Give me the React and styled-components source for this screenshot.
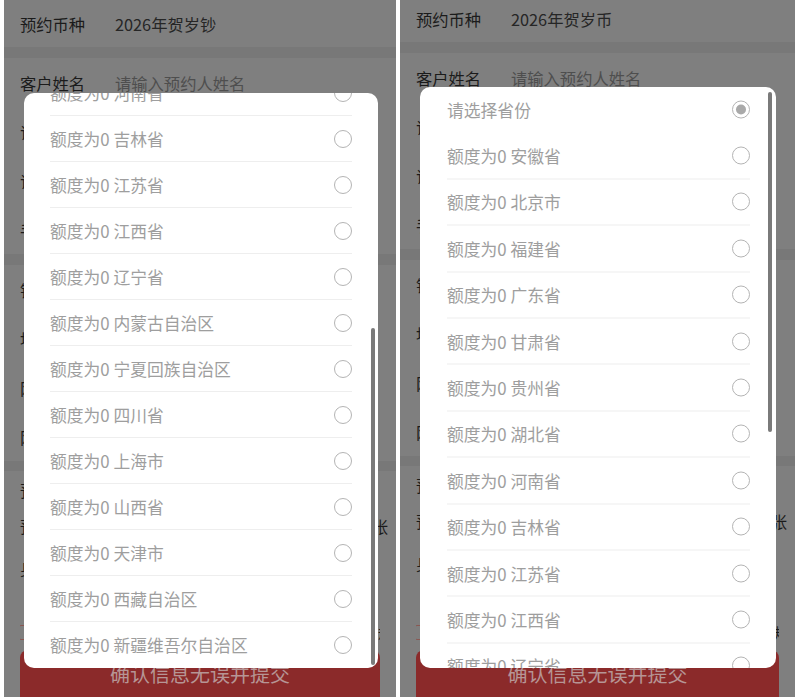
import React from "react";
import styled, { createGlobalStyle } from "styled-components";

const GlobalStyle = createGlobalStyle`
  html, body {
    margin: 0;
    padding: 0;
    background: #ffffff;
  }
  body {
    font-family: "Noto Sans CJK SC", "Noto Sans", sans-serif;
  }
  * {
    box-sizing: border-box;
  }
`;

const Shots = styled.div`
  display: flex;
  gap: 4px;
  padding-left: 4px;
  width: 800px;
  height: 697px;
  overflow: hidden;
`;

const Screen = styled.div`
  position: relative;
  flex-shrink: 0;
  width: ${(p) => p.$width}px;
  height: 697px;
  overflow: hidden;
  background: #7f7f7f;
`;

const Page = styled.div`
  display: flex;
  flex-direction: column;
  margin-top: -${(p) => p.$shift}px;
  height: calc(100% + ${(p) => p.$shift}px);
`;

const Row = styled.div`
  display: flex;
  align-items: center;
  height: ${(p) => p.$h}px;
  padding: 0 8px 0 16px;
  font-size: 16.3px;
  white-space: nowrap;
`;

const Label = styled.span`
  width: 95px;
  flex-shrink: 0;
  color: #1b1b1b;
`;

const Value = styled.span`
  flex: 1;
  color: ${(p) => (p.$placeholder ? "#4e4e4e" : "#262626")};
`;

const Unit = styled.span`
  color: #1b1b1b;
`;

const Band = styled.div`
  height: ${(p) => p.$h}px;
  background: #787878;
`;

const Footer = styled.div`
  margin-top: auto;
  padding: 0 16px;
`;

const AgreeRow = styled.div`
  display: flex;
  align-items: center;
  gap: 6px;
  height: 36px;
  font-size: 14px;
  color: #1b1b1b;
  white-space: nowrap;
  overflow: hidden;
`;

const Checkbox = styled.span`
  width: 15px;
  height: 15px;
  flex-shrink: 0;
  margin-left: -2px;
  border: 1.5px solid #8a5751;
  border-radius: 3px;
`;

const SubmitButton = styled.button`
  display: flex;
  align-items: center;
  justify-content: center;
  width: 100%;
  height: 47px;
  border: none;
  border-radius: 8px 8px 0 0;
  background: #8b2a2a;
  color: #b69595;
  font-family: inherit;
  font-size: 20px;
`;

const Dialog = styled.div`
  position: absolute;
  left: ${(p) => p.$left}px;
  top: ${(p) => p.$top}px;
  width: ${(p) => p.$w}px;
  height: ${(p) => p.$h}px;
  background: #ffffff;
  border-radius: 10px;
  overflow: hidden;
`;

const OptionList = styled.ul`
  list-style: none;
  margin: 0;
  padding: 0;
  transform: translateY(-${(p) => p.$scroll}px);
`;

const Option = styled.li`
  display: flex;
  align-items: center;
  justify-content: space-between;
  height: ${(p) => p.$h}px;
  margin: 0 ${(p) => p.$inset}px 0 ${(p) => p.$indent}px;
  border-top: 1px solid ${(p) => (p.$divider ? "#eeeeee" : "transparent")};
  font-size: 16.8px;
  color: #9e9e9e;
  white-space: nowrap;
`;

const Radio = styled.span`
  display: flex;
  align-items: center;
  justify-content: center;
  flex-shrink: 0;
  width: 18px;
  height: 18px;
  border-radius: 50%;
  border: 1.5px solid #b4b4b4;

  &::after {
    content: "";
    display: ${(p) => (p.$checked ? "block" : "none")};
    width: 10px;
    height: 10px;
    border-radius: 50%;
    background: #a9a9a9;
  }
`;

const Thumb = styled.div`
  position: absolute;
  right: ${(p) => p.$right}px;
  top: ${(p) => p.$top}px;
  width: 4px;
  height: ${(p) => p.$h}px;
  border-radius: 2px;
  background: #7a7a7a;
`;

const provinces = [
  "安徽省",
  "北京市",
  "福建省",
  "广东省",
  "甘肃省",
  "贵州省",
  "湖北省",
  "河南省",
  "吉林省",
  "江苏省",
  "江西省",
  "辽宁省",
  "内蒙古自治区",
  "宁夏回族自治区",
  "四川省",
  "上海市",
  "山西省",
  "天津市",
  "西藏自治区",
  "新疆维吾尔自治区",
];

const options = ["请选择省份", ...provinces.map((p) => `额度为0 ${p}`)];

const shots = [
  {
    width: 392,
    shift: 0,
    coin: "2026年贺岁钞",
    dialog: { left: 20, top: 93, w: 354, h: 575 },
    itemH: 46,
    indent: 26,
    inset: 26,
    scroll: 392,
    thumb: { top: 235, h: 337, right: 3 },
  },
  {
    width: 395,
    shift: 5,
    coin: "2026年贺岁币",
    dialog: { left: 20, top: 87, w: 356, h: 581 },
    itemH: 46.4,
    indent: 27,
    inset: 26,
    scroll: 1.5,
    thumb: { top: 5, h: 340, right: 4 },
  },
];

function PhoneShot({ shot }) {
  return (
    <Screen $width={shot.width}>
      <Page $shift={shot.shift}>
        <Row $h={47}>
          <Label>预约币种</Label>
          <Value>{shot.coin}</Value>
        </Row>
        <Band $h={11} />
        <Row $h={49}>
          <Label>客户姓名</Label>
          <Value $placeholder>请输入预约人姓名</Value>
        </Row>
        <Row $h={49}>
          <Label>证件类型</Label>
          <Value>居民身份证</Value>
        </Row>
        <Row $h={49}>
          <Label>证件号码</Label>
          <Value $placeholder>请输入证件号码</Value>
        </Row>
        <Row $h={49}>
          <Label>手机号码</Label>
          <Value $placeholder>请输入手机号码</Value>
        </Row>
        <Band $h={11} />
        <Row $h={49}>
          <Label>银行名称</Label>
          <Value>中国工商银行</Value>
        </Row>
        <Row $h={49}>
          <Label>地区选择</Label>
          <Value $placeholder>请选择省份</Value>
        </Row>
        <Row $h={49}>
          <Label>网点名称</Label>
          <Value $placeholder>请选择网点</Value>
        </Row>
        <Row $h={49}>
          <Label>网点地址</Label>
          <Value $placeholder>请选择网点</Value>
        </Row>
        <Band $h={10} />
        <Row $h={38}>
          <Label>预约信息</Label>
        </Row>
        <Row $h={34}>
          <Label>预约数量</Label>
          <Value $placeholder>可预约数量</Value>
          <Unit>张</Unit>
        </Row>
        <Row $h={49}>
          <Label>身份核验</Label>
          <Value $placeholder>请完成核验</Value>
        </Row>
        <Footer>
          <AgreeRow>
            <Checkbox />
            我已阅读并同意《2026年贺岁纪念钞预约兑换须知》及规则
          </AgreeRow>
          <SubmitButton>确认信息无误并提交</SubmitButton>
        </Footer>
      </Page>

      <Dialog
        $left={shot.dialog.left}
        $top={shot.dialog.top}
        $w={shot.dialog.w}
        $h={shot.dialog.h}
      >
        <OptionList $scroll={shot.scroll}>
          {options.map((text, i) => (
            <Option
              key={text}
              $h={shot.itemH}
              $indent={shot.indent}
              $inset={shot.inset}
              $divider={i >= 2}
            >
              {text}
              <Radio $checked={i === 0} />
            </Option>
          ))}
        </OptionList>
        <Thumb $top={shot.thumb.top} $h={shot.thumb.h} $right={shot.thumb.right} />
      </Dialog>
    </Screen>
  );
}

export default function App() {
  return (
    <>
      <GlobalStyle />
      <Shots>
        {shots.map((shot) => (
          <PhoneShot key={shot.coin} shot={shot} />
        ))}
      </Shots>
    </>
  );
}
